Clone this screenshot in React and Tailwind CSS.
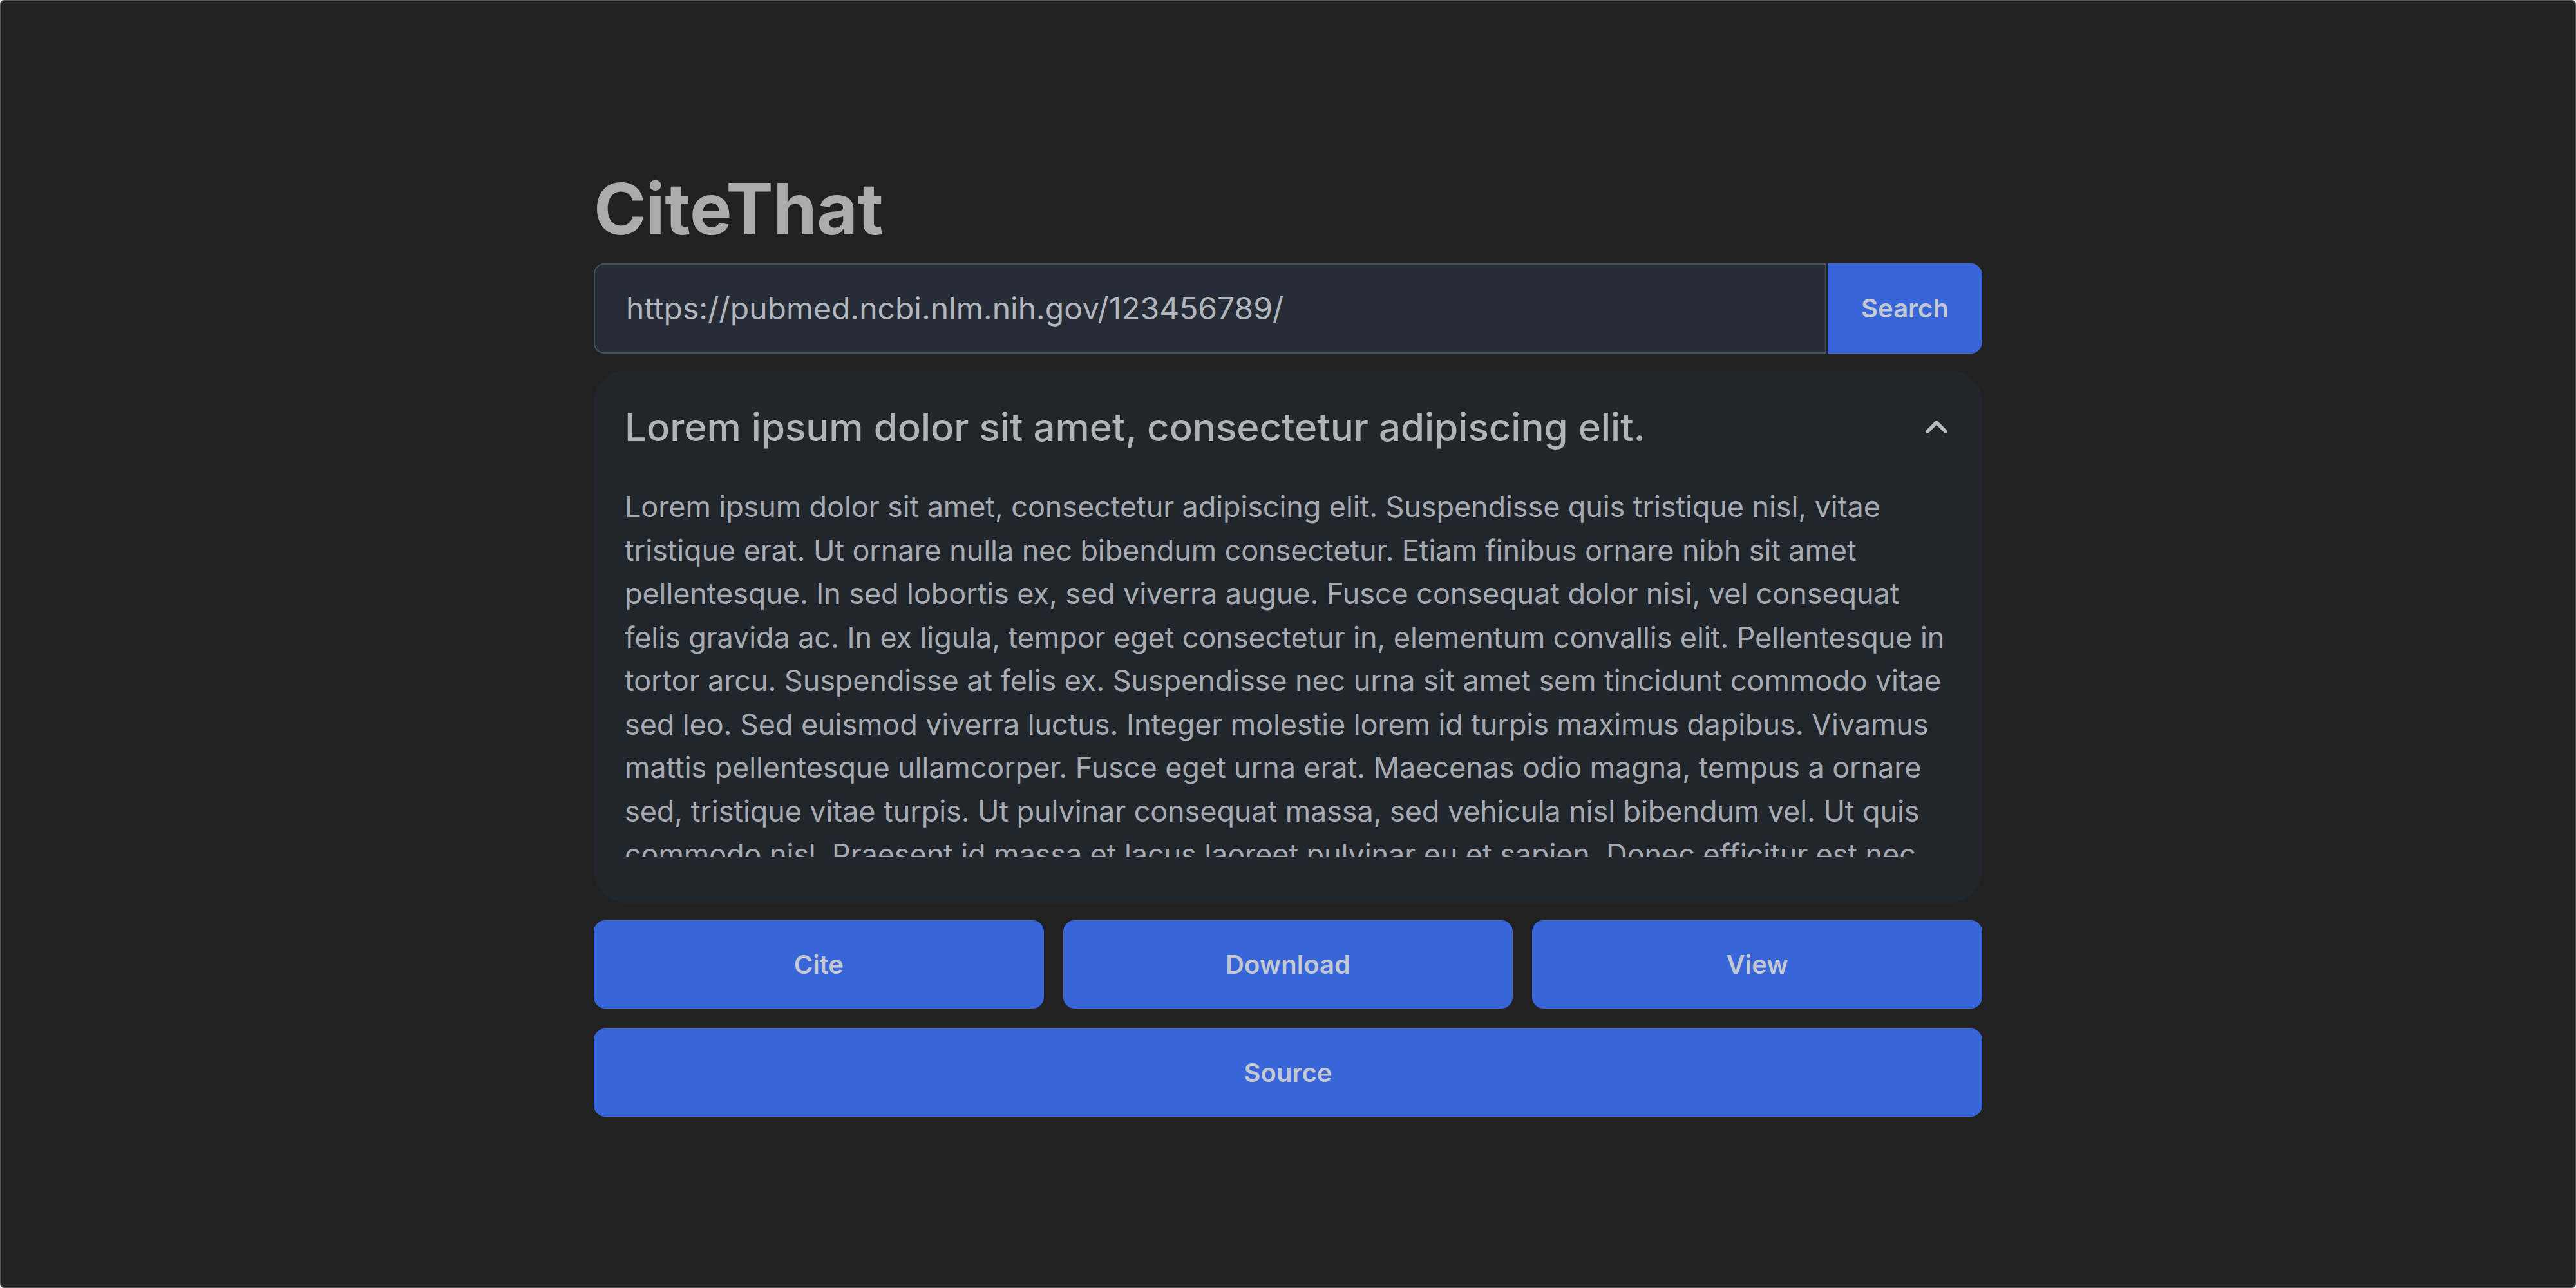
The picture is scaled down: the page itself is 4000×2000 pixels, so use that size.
import { ChevronUp } from 'lucide-react';

const body =
  'Lorem ipsum dolor sit amet, consectetur adipiscing elit. Suspendisse quis tristique nisl, vitae tristique erat. Ut ornare nulla nec bibendum consectetur. Etiam finibus ornare nibh sit amet pellentesque. In sed lobortis ex, sed viverra augue. Fusce consequat dolor nisi, vel consequat felis gravida ac. In ex ligula, tempor eget consectetur in, elementum convallis elit. Pellentesque in tortor arcu. Suspendisse at felis ex. Suspendisse nec urna sit amet sem tincidunt commodo vitae sed leo. Sed euismod viverra luctus. Integer molestie lorem id turpis maximus dapibus. Vivamus mattis pellentesque ullamcorper. Fusce eget urna erat. Maecenas odio magna, tempus a ornare sed, tristique vitae turpis. Ut pulvinar consequat massa, sed vehicula nisl bibendum vel. Ut quis commodo nisl. Praesent id massa et lacus laoreet pulvinar eu et sapien. Donec efficitur est nec tellus tincidunt, in fermentum nunc aliquet. Nulla facilisi. Curabitur at lorem vitae mi tempor luctus.';

const ActionButton = ({ label, className = '' }) => (
  <button className={`h-[137px] rounded-[18px] bg-[#3866d8] text-[40px] font-semibold text-[#c3c8d3] ${className}`}>
    {label}
  </button>
);

export default function App() {
  return (
    <div
      className="h-[2000px] w-[4000px] rounded-[6px] border-2 border-[#5a5a5a] bg-[#212121]"
      style={{ fontFamily: 'Inter, "Noto Sans", sans-serif' }}
    >
      <div className="mx-auto flex w-[2156px] flex-col pt-[252px]">
        {/* Title */}
        <h1 className="mb-[15px] text-[110px] font-bold leading-[140px] tracking-[-0.5px] text-[#ababab]">CiteThat</h1>

        {/* Search bar */}
        <div className="flex h-[140px]">
          <div className="flex flex-1 items-center rounded-l-[16px] border-2 border-[#4b525c] bg-[#262d37] pl-[48px] text-[48px] text-[#b3b7bd]">
            https://pubmed.ncbi.nlm.nih.gov/123456789/
          </div>
          <button className="ml-[2px] w-[240px] rounded-r-[18px] bg-[#3866d8] text-[40px] font-semibold text-[#c3c8d3]">
            Search
          </button>
        </div>

        {/* Article card */}
        <div className="mt-[27px] rounded-[48px] bg-[#21262d] px-[48px] pt-[47px] pb-[71px]">
          <div className="flex items-center justify-between">
            <h2 className="text-[60px] font-medium leading-[80px] text-[#b0b3b8]">
              Lorem ipsum dolor sit amet, consectetur adipiscing elit.
            </h2>
            <ChevronUp size={56} strokeWidth={2.4} className="mr-[-5px] text-[#b9bcc1]" />
          </div>
          <p className="mt-[50px] h-[577px] overflow-hidden text-[45px] leading-[67.5px] tracking-[-0.1px] text-[#a7abb1]">
            {body}
          </p>
        </div>

        {/* Actions */}
        <div className="mt-[28px] grid grid-cols-3 gap-[30px]">
          <ActionButton label="Cite" />
          <ActionButton label="Download" />
          <ActionButton label="View" />
        </div>
        <ActionButton label="Source" className="mt-[31px] w-full" />
      </div>
    </div>
  );
}
